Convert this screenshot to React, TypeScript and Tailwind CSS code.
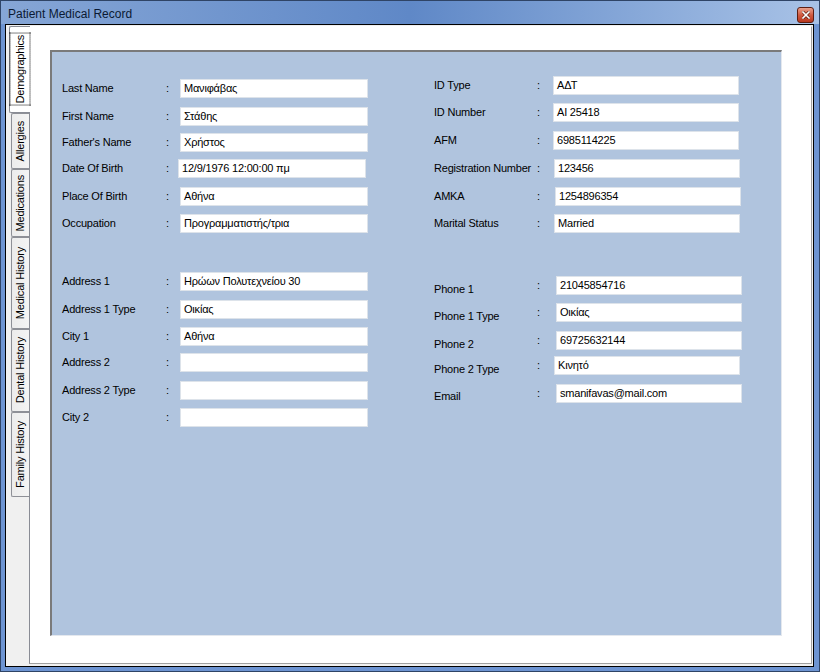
import React from "react";

type Field = {
  label: string;
  value: string;
  row: string; // top margin of the row
  labelShift?: string;
  inputShift?: string;
};

const leftTop: Field[] = [
  { label: "Last Name", value: "Μανιφάβας", row: "mt-[27px]" },
  { label: "First Name", value: "Στάθης", row: "mt-[9px]" },
  { label: "Father's Name", value: "Χρήστος", row: "mt-[7px]" },
  { label: "Date Of Birth", value: "12/9/1976 12:00:00 πμ", row: "mt-[7px]", inputShift: "-ml-[2px]" },
  { label: "Place Of Birth", value: "Αθήνα", row: "mt-[9px]" },
  { label: "Occupation", value: "Προγραμματιστής/τρια", row: "mt-[8px]" },
];

const leftBottom: Field[] = [
  { label: "Address 1", value: "Ηρώων Πολυτεχνείου 30", row: "mt-[39px]" },
  { label: "Address 1 Type", value: "Οικίας", row: "mt-[9px]" },
  { label: "City 1", value: "Αθήνα", row: "mt-[8px]" },
  { label: "Address 2", value: "", row: "mt-[7px]" },
  { label: "Address 2 Type", value: "", row: "mt-[9px]" },
  { label: "City 2", value: "", row: "mt-[8px]" },
];

const rightTop: Field[] = [
  { label: "ID Type", value: "ΑΔΤ", row: "mt-[24px]" },
  { label: "ID Number", value: "AI 25418", row: "mt-[8px]" },
  { label: "AFM", value: "6985114225", row: "mt-[9px]" },
  { label: "Registration Number", value: "123456", row: "mt-[9px]", inputShift: "ml-[1px]" },
  { label: "AMKA", value: "1254896354", row: "mt-[9px]", inputShift: "ml-[2px]" },
  { label: "Marital Status", value: "Married", row: "mt-[8px]", inputShift: "ml-[1px]" },
];

const rightBottom: Field[] = [
  { label: "Phone 1", value: "21045854716", row: "mt-[43px]", labelShift: "translate-y-[4px]", inputShift: "ml-[3px]" },
  { label: "Phone 1 Type", value: "Οικίας", row: "mt-[8px]", labelShift: "translate-y-[4px]", inputShift: "ml-[3px]" },
  { label: "Phone 2", value: "69725632144", row: "mt-[9px]", labelShift: "translate-y-[4px]", inputShift: "ml-[3px]" },
  { label: "Phone 2 Type", value: "Κινητό", row: "mt-[6px]", labelShift: "translate-y-[4px]", inputShift: "ml-[1px]" },
  { label: "Email", value: "smanifavas@mail.com", row: "mt-[9px]", labelShift: "translate-y-[3px]", inputShift: "ml-[3px]" },
];

const tabs = [
  { name: "Demographics", h: "h-[87px]", active: true },
  { name: "Allergies", h: "h-[56px]" },
  { name: "Medications", h: "h-[68px]" },
  { name: "Medical History", h: "h-[92px]" },
  { name: "Dental History", h: "h-[83px]" },
  { name: "Family History", h: "h-[85px]" },
];

const FormRow = ({ f, labelW, colonW, inputW }: { f: Field; labelW: string; colonW: string; inputW: string }) => (
  <div className={`flex h-[19px] items-center ${f.row}`}>
    <span className={`${labelW} shrink-0 whitespace-nowrap ${f.labelShift ?? ""}`}>{f.label}</span>
    <span className={`${colonW} shrink-0`}>:</span>
    <div
      className={`${inputW} h-[19px] shrink-0 bg-white border border-[#dde3ea] pl-[3px] flex items-center whitespace-nowrap overflow-hidden ${f.inputShift ?? ""}`}
    >
      {f.value}
    </div>
  </div>
);

const TabButton = ({ name, h, active }: { name: string; h: string; active?: boolean }) =>
  active ? (
    <div
      className={`${h} ml-[3px] -mr-[1px] w-[21px] bg-white border border-r-0 border-[#898c95] rounded-l-[2px] flex items-center justify-center relative z-10`}
    >
      <span className="[writing-mode:vertical-rl] rotate-180 outline-1 outline-dotted outline-black px-[1px] py-[1px] whitespace-nowrap">
        {name}
      </span>
    </div>
  ) : (
    <div
      className={`${h} ml-[5px] w-[18px] bg-gradient-to-r from-[#ececec] to-[#f4f4f4] border border-r-0 border-[#8e9097] rounded-l-[2px] flex items-center justify-center`}
    >
      <span className="[writing-mode:vertical-rl] rotate-180 whitespace-nowrap">{name}</span>
    </div>
  );

export default function App() {
  return (
    <div
      className="w-[820px] h-[672px] flex flex-col bg-[#6d94d2] border border-[#2f4466] text-[11px] tracking-[-0.2px] text-black"
      style={{ fontFamily: '"Liberation Sans", Arial, sans-serif' }}
    >
      {/* title bar */}
      <div className="h-[23px] shrink-0 flex items-center justify-between bg-gradient-to-r from-[#86a6d6] via-[#5f88c7] to-[#a8c2e6] pl-[7px] pr-[5px]">
        <span className="text-[12px] tracking-normal text-[#0b1a33] pt-[2px]">Patient Medical Record</span>
        <div className="w-[17px] h-[16px] mt-[4px] rounded-[3px] border border-[#5d1e12] bg-gradient-to-b from-[#e8a08c] via-[#d05a40] to-[#b8361e] flex items-center justify-center">
          <svg width="8" height="8" viewBox="0 0 8 8">
            <path d="M1 1 L7 7 M7 1 L1 7" stroke="#5d1e12" strokeWidth="3" strokeLinecap="square" />
            <path d="M1 1 L7 7 M7 1 L1 7" stroke="white" strokeWidth="1.6" strokeLinecap="square" />
          </svg>
        </div>
      </div>

      {/* client area */}
      <div className="flex-1 ml-[4px] mr-[5px] mb-[4px] border border-black bg-[#f0f0f0] flex pt-[1px] pb-[2px] pr-[1px]">
        {/* vertical tab strip */}
        <div className="w-[23px] shrink-0 flex flex-col">
          {tabs.map((t) => (
            <TabButton key={t.name} name={t.name} h={t.h} active={t.active} />
          ))}
        </div>

        {/* tab page */}
        <div className="flex-1 bg-white border border-t-white border-l-[#898c95] border-r-[#a0a0a0] border-b-[#a0a0a0] pl-[20px] pt-[23px]">
          <div className="w-[732px] h-[586px] bg-[#b0c4de] border-t-2 border-l-2 border-t-[#7a7a7a] border-l-[#7a7a7a] border-r border-b border-r-[#e4e8ee] border-b-[#e4e8ee] pl-[10px] flex">
            <div className="w-[372px] flex flex-col">
              {leftTop.map((f) => (
                <FormRow key={f.label} f={f} labelW="w-[104px]" colonW="w-[14px]" inputW="w-[188px]" />
              ))}
              {leftBottom.map((f) => (
                <FormRow key={f.label} f={f} labelW="w-[104px]" colonW="w-[14px]" inputW="w-[188px]" />
              ))}
            </div>
            <div className="flex flex-col">
              {rightTop.map((f) => (
                <FormRow key={f.label} f={f} labelW="w-[103px]" colonW="w-[16px]" inputW="w-[186px]" />
              ))}
              {rightBottom.map((f) => (
                <FormRow key={f.label} f={f} labelW="w-[103px]" colonW="w-[16px]" inputW="w-[186px]" />
              ))}
            </div>
          </div>
        </div>
      </div>
    </div>
  );
}
